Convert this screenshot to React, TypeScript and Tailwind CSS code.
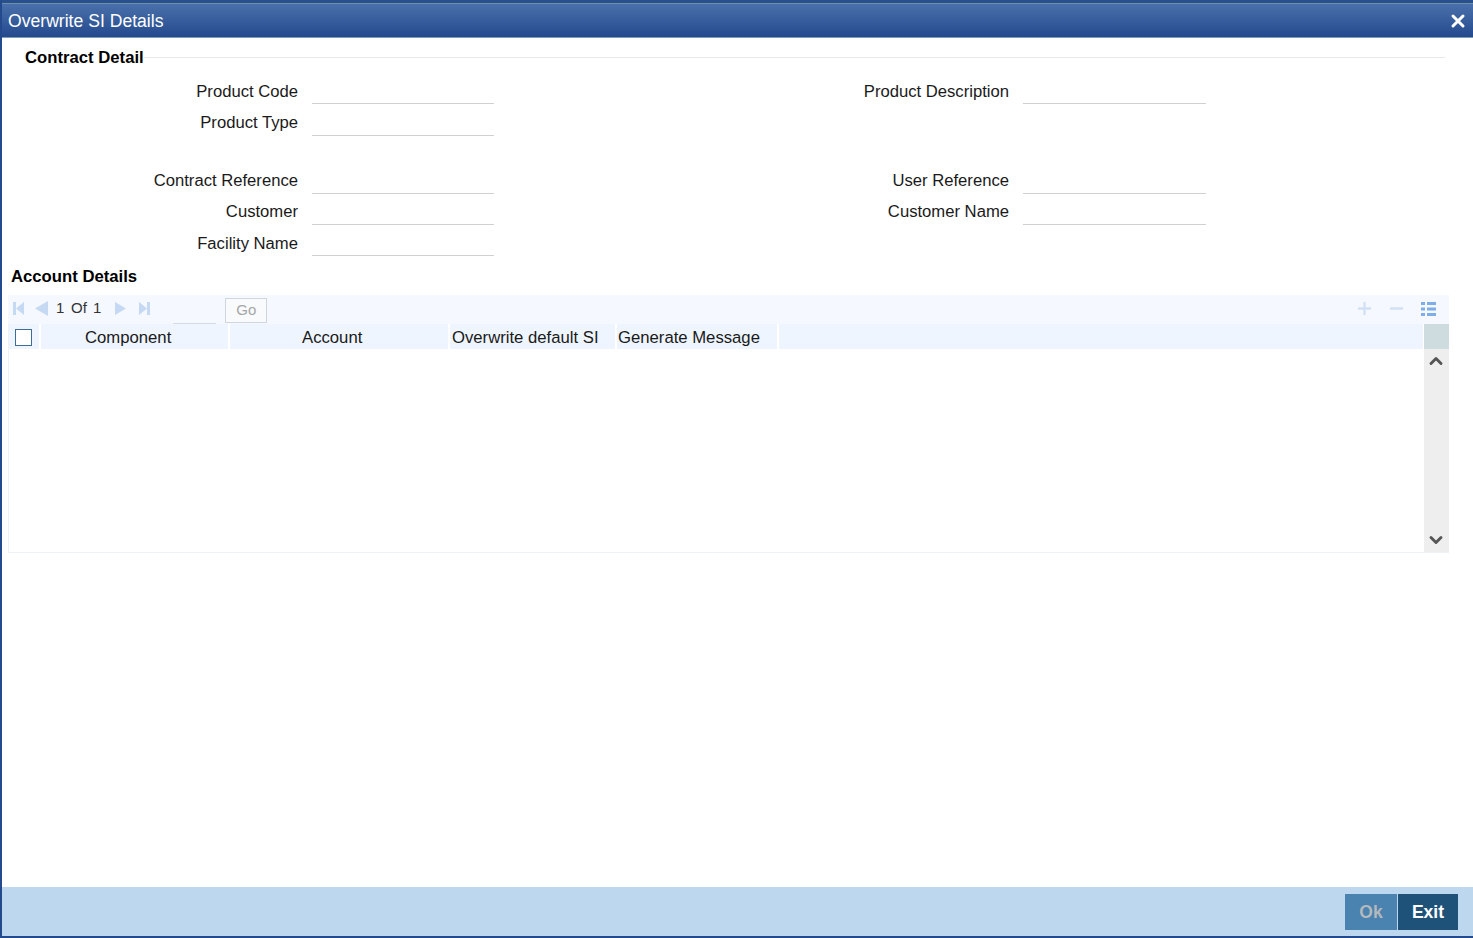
import React from 'react';
import { ChevronDown, ChevronUp, Minus, Plus, X } from 'lucide-react';

const Field: React.FC<{ label: string; className: string; inputWidth: string; labelPad?: string }> = ({
  label,
  className,
  inputWidth,
  labelPad = 'pt-[10px]',
}) => (
  <div className="flex items-start">
    <label className={`${className} ${labelPad} text-right text-[16.65px] leading-[20px] text-[#1a1a1a]`}>{label}</label>
    <div className={`ml-[14px] h-[32px] ${inputWidth} border-b border-[#d0d0d0]`} />
  </div>
);

const Row: React.FC<{ left: string; right?: string; className?: string; labelPad?: string }> = ({
  left,
  right,
  className,
  labelPad,
}) => (
  <div className={`flex ${className ?? ''}`}>
    <Field label={left} className="w-[296px]" inputWidth="w-[182px]" labelPad={labelPad} />
    {right && <Field label={right} className="w-[515px]" inputWidth="w-[183px]" labelPad={labelPad} />}
  </div>
);

const Pager: React.FC<{ dir: 'first' | 'prev' | 'next' | 'last' }> = ({ dir }) => {
  const paths = {
    first: 'M3 1h3v13H3z M14 1v13L6 7.5z',
    prev: 'M14 0v15L1 7.5z',
    next: 'M2 1v13l11-6.5z',
    last: 'M2 1v13l8-6.5z M10 1h3v13h-3z',
  };
  return (
    <svg viewBox="0 0 15 15" className="h-[15px] w-[15px] fill-[#c5d9f3]">
      <path d={paths[dir]} />
    </svg>
  );
};

const headers = [
  { label: 'Component', width: 'w-[189px]', align: 'pl-[44px]' },
  { label: 'Account', width: 'w-[220px]', align: 'pl-[72px]' },
  { label: 'Overwrite default SI', width: 'w-[167px]', align: 'pl-[2px]' },
  { label: 'Generate Message', width: 'w-[162px]', align: 'pl-[1px]' },
];

export default function App() {
  return (
    <div className="flex h-screen w-full flex-col overflow-hidden border-b-2 border-l-2 border-[#234a8c] bg-white font-['Liberation_Sans',Arial,sans-serif]">
      {/* Title bar */}
      <div className="-ml-[2px] h-[4px] shrink-0 border-b border-[#6d8fa8] bg-[#2a4f8f]" />
      <div className="-ml-[2px] flex h-[34px] shrink-0 items-center justify-between border-b border-[#7f9db5] bg-gradient-to-b from-[#4a70aa] to-[#244a8e] pl-[8px] pr-[5px]">
        <span className="pt-[2px] text-[17.6px] text-white">Overwrite SI Details</span>
        <X className="h-[20px] w-[20px] text-white" strokeWidth={3.6} />
      </div>

      {/* Contract Detail */}
      <div className="mt-[9px] flex items-center pl-[23px] pr-[28px]">
        <h2 className="text-[16.7px] font-bold leading-[22px] text-black">Contract Detail</h2>
        <div className="-mt-[2px] h-px flex-1 bg-[#e8e8e8]" />
      </div>
      <Row className="mt-[3px]" left="Product Code" right="Product Description" />
      <Row left="Product Type" labelPad="pt-[9px]" />
      <Row className="mt-[26px]" left="Contract Reference" right="User Reference" labelPad="pt-[9px]" />
      <Row left="Customer" right="Customer Name" className="-mt-px" labelPad="pt-[9px]" />
      <Row left="Facility Name" className="-mt-px" />

      {/* Account Details */}
      <h2 className="mt-[10px] pl-[9px] text-[16.7px] font-bold leading-[22px] text-black">Account Details</h2>

      <div className="ml-[6px] mr-[24px] mt-[7px]">
        <div className="flex h-[29px] items-center justify-between bg-[#f5f8fe]">
          <div className="flex h-full items-center text-[15px] text-[#333]">
            <div className="-mt-[2px] ml-[2px] flex w-[39px] justify-between">
              <Pager dir="first" />
              <Pager dir="prev" />
            </div>
            <span className="-mt-[2px] ml-[7px] w-[15px]">1</span>
            <span className="-mt-[2px] w-[22px]">Of</span>
            <span className="-mt-[2px]">1</span>
            <div className="-mt-[2px] ml-[12px] flex w-[39px] justify-between">
              <Pager dir="next" />
              <Pager dir="last" />
            </div>
            <div className="ml-[21px] h-full w-[43px] border-b border-[#d5dbe2]" />
            <button className="ml-[9px] mt-[1px] h-[25px] w-[42px] border border-[#cfd6de] bg-[#f8fafc] text-[15px] text-[#a6a6a6]">Go</button>
          </div>
          <div className="flex items-center gap-[13px] pb-[2px] pr-[13px]">
            <Plus className="h-[19px] w-[19px] text-[#d2e0f5]" strokeWidth={3} />
            <Minus className="h-[19px] w-[19px] text-[#d2e0f5]" strokeWidth={3} />
            <svg viewBox="0 0 15 14" className="ml-[2px] h-[14px] w-[15px] fill-[#7fade8]">
              <path d="M0 0h4v3H0z M6 0h9v3H6z M0 5.5h4v3H0z M6 5.5h9v3H6z M0 11h4v3H0z M6 11h9v3H6z" />
            </svg>
          </div>
        </div>

        <div className="flex h-[229px] border-b border-l border-[#eef1f8]">
          <div className="min-w-0 flex-1">
            <div className="flex h-[25px] bg-[#eef5fe] text-[16.7px] leading-[27px] text-[#1a1a1a]">
              <div className="flex w-[32px] items-center justify-center border-r-2 border-white">
                <div className="mr-[2px] mt-[1px] h-[17px] w-[17px] border border-[#3f6d99] bg-white" />
              </div>
              {headers.map(h => (
                <div key={h.label} className={`${h.width} ${h.align} whitespace-nowrap border-r-2 border-white`}>
                  {h.label}
                </div>
              ))}
            </div>
          </div>
          <div className="flex w-[26px] shrink-0 flex-col border-l border-white bg-[#eeeeee]">
            <div className="h-[25px] bg-[#cfdcdf]" />
            <ChevronUp className="ml-[2px] mt-[2px] h-[20px] w-[20px] text-[#555]" strokeWidth={3.5} />
            <div className="flex-1" />
            <ChevronDown className="mb-[2px] ml-[2px] h-[20px] w-[20px] text-[#555]" strokeWidth={3.5} />
          </div>
        </div>
      </div>

      <div className="flex-1" />

      {/* Footer */}
      <div className="flex h-[49px] shrink-0 items-start justify-end bg-[#bdd7ee] pr-[15px] pt-[7px]">
        <button className="h-[36px] w-[52px] bg-[#4a82b0] text-[17.5px] font-bold text-[#b3b9bd]">Ok</button>
        <button className="ml-px h-[36px] w-[60px] bg-[#1f5279] text-[17.5px] font-bold text-white">Exit</button>
      </div>
    </div>
  );
}
